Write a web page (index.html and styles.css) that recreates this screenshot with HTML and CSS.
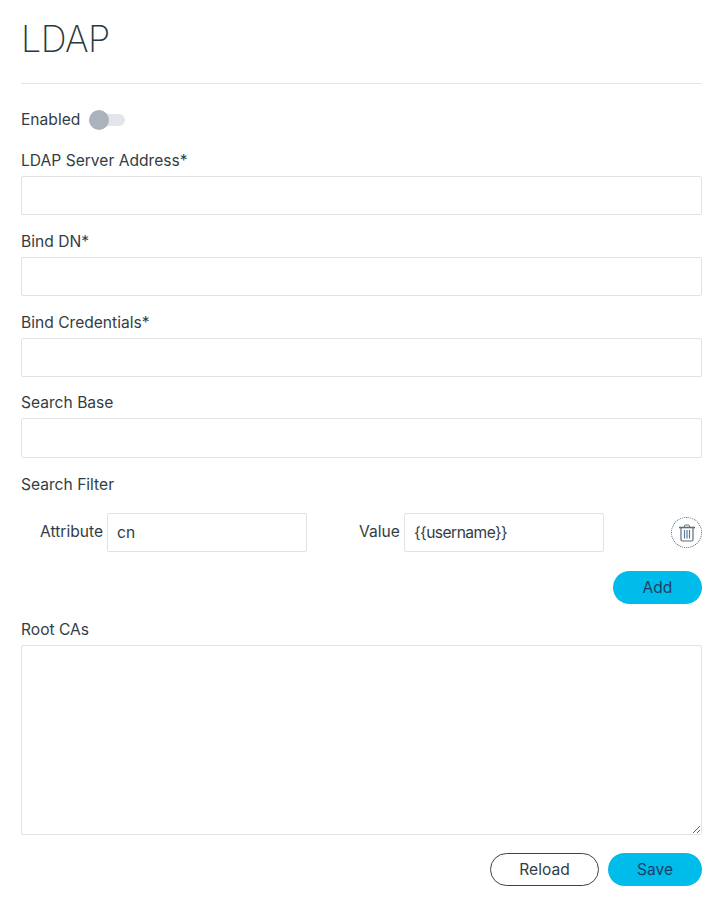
FILE: index.html
```html
<!DOCTYPE html>
<html lang="en">
<head>
  <meta charset="UTF-8">
  <title>LDAP</title>
  <link rel="stylesheet" href="styles.css">
</head>
<body>
  <div class="page">
    <h1 class="title">LDAP</h1>

    <form class="ldap-form">
      <div class="enabled-row">
        <span class="enabled-label">Enabled</span>
        <span class="toggle"><span class="toggle-knob"></span></span>
      </div>

      <div class="field">
        <label class="field-label">LDAP Server Address*</label>
        <input class="text-input" type="text">
      </div>
      <div class="field">
        <label class="field-label">Bind DN*</label>
        <input class="text-input" type="text">
      </div>
      <div class="field">
        <label class="field-label">Bind Credentials*</label>
        <input class="text-input" type="text">
      </div>
      <div class="field field-tight">
        <label class="field-label">Search Base</label>
        <input class="text-input text-input-tall" type="text">
      </div>

      <div class="filter">
        <div class="field-label">Search Filter</div>
        <div class="filter-row">
          <label class="filter-attr-label">Attribute</label>
          <input class="text-input filter-attr" type="text" value="cn">
          <label class="filter-value-label">Value</label>
          <input class="text-input filter-value" type="text" value="{{username}}">
          <button class="delete-btn" type="button" aria-label="Delete">
            <svg width="18" height="18" viewBox="0 0 18 18" fill="none">
              <path d="M1 3.500h16" stroke="#5d6d7a" stroke-width="1.600"/>
              <path d="M6.500 3V2a1 1 0 0 1 1-1h3a1 1 0 0 1 1 1v1" stroke="#5d6d7a"/>
              <path d="M3 4v11.500A1.500 1.500 0 0 0 4.500 17h9a1.500 1.500 0 0 0 1.500-1.500V4" stroke="#5d6d7a" stroke-width="1.200"/>
              <path d="M6.500 6v8.500M9 6v8.500M11.500 6v8.500" stroke="#5d7a94" stroke-width="1.200"/>
            </svg>
          </button>
        </div>
        <div class="add-row">
          <button class="btn btn-primary btn-add" type="button">Add</button>
        </div>
      </div>

      <div class="root-cas">
        <label class="field-label">Root CAs</label>
        <textarea class="text-area"></textarea>
      </div>

      <div class="actions">
        <button class="btn btn-outline" type="button">Reload</button>
        <button class="btn btn-primary btn-save" type="button">Save</button>
      </div>
    </form>
  </div>
</body>
</html>
```

FILE: styles.css
```css
* {
  margin: 0;
  padding: 0;
  box-sizing: border-box;
}

body {
  font-family: 'Inter', 'Liberation Sans', sans-serif;
  font-size: 15.6px;
  background-color: #fff;
  color: #333d45;
}

.page {
  padding: 0 20px 0 21px;
}

/* Header */
.title {
  font-size: 36px;
  font-weight: 200;
  letter-spacing: -0.6px;
  line-height: 46px;
  padding-top: 16px;
  height: 84px;
  border-bottom: 1px solid #e2e4e6;
  color: #2b3840;
}

/* Enabled toggle */
.enabled-row {
  display: flex;
  align-items: center;
  gap: 8.5px;
  height: 24px;
  margin-top: 24px;
}

.enabled-label {
  position: relative;
  top: -1px;
}

.toggle {
  position: relative;
  display: block;
  width: 36px;
  height: 12px;
  background-color: #e2e6ea;
  border-radius: 6px;
}

.toggle-knob {
  position: absolute;
  left: 0;
  top: -4px;
  width: 20px;
  height: 20px;
  border-radius: 50%;
  background-color: #aab3bb;
}

/* Fields */
.field {
  margin-top: 17px;
}

.field + .field {
  margin-top: 15px;
}

.field + .field-tight {
  margin-top: 14px;
}

.field-label {
  display: block;
  height: 24px;
  line-height: 24px;
}

.text-input {
  display: block;
  width: 100%;
  height: 39px;
  margin-top: 3px;
  padding: 0 9px;
  font-family: inherit;
  font-size: 15.6px;
  color: #333d45;
  background: #fff;
  border: 1px solid #e0e2e4;
  border-radius: 2px;
}

.text-input-tall {
  height: 40px;
}

/* Search filter */
.filter {
  margin-top: 15px;
}

.filter-row {
  display: flex;
  align-items: center;
  margin-top: 16px;
  height: 39px;
}

.filter-attr-label {
  margin-left: 19px;
  width: 67px;
  position: relative;
  top: -1px;
}

.filter-attr {
  width: 200px;
  margin: 0;
}

.filter-value-label {
  margin-left: 52px;
  width: 45px;
  position: relative;
  top: -1px;
}

.filter-value {
  width: 200px;
  margin: 0;
  letter-spacing: -0.55px;
}

.delete-btn {
  width: 31px;
  height: 31px;
  margin-left: auto;
  display: flex;
  align-items: center;
  justify-content: center;
  background: #fff;
  border: 1px dotted #5d6d7a;
  border-radius: 50%;
}

.add-row {
  display: flex;
  justify-content: flex-end;
  margin-top: 19px;
}

/* Buttons */
.btn {
  height: 33px;
  font-family: inherit;
  font-size: 15.6px;
  border-radius: 17px;
  color: #333d45;
  cursor: pointer;
}

.btn-primary {
  background-color: #00bceb;
  border: none;
  color: #1e3f66;
}

.btn-add {
  width: 89px;
}

.btn-save {
  width: 94px;
}

.btn-outline {
  width: 109px;
  background: #fff;
  border: 1px solid #39434b;
}

/* Root CAs */
.root-cas {
  margin-top: 14px;
}

.text-area {
  display: block;
  width: 100%;
  height: 190px;
  margin-top: 3px;
  font-family: inherit;
  border: 1px solid #e0e2e4;
  border-radius: 2px;
}

.actions {
  display: flex;
  justify-content: flex-end;
  gap: 9px;
  margin-top: 18px;
}
```
